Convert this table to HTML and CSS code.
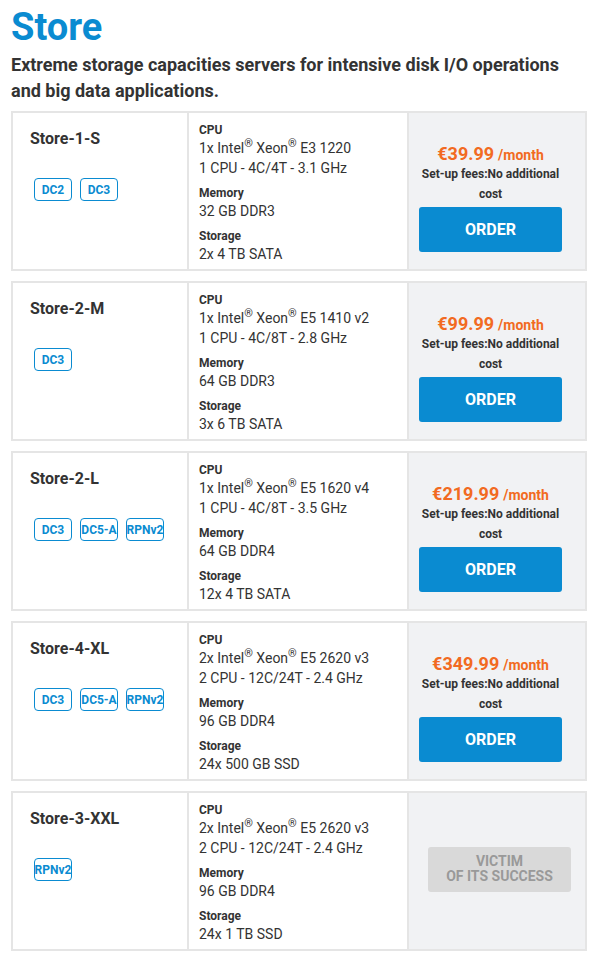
FILE: index.html
```html
<!DOCTYPE html>
<html lang="en">
<head>
<meta charset="utf-8">
<title>Store</title>
<link rel="stylesheet" href="styles.css">
</head>
<body>
<h1 class="page-title">Store</h1>
<p class="page-subtitle">Extreme storage capacities servers for intensive disk I/O operations and big data applications.</p>

<div class="offers">
  <div class="offer">
    <div class="offer-name">
      <div class="name">Store-1-S</div>
      <div class="badges"><span class="badge">DC2</span><span class="badge">DC3</span></div>
    </div>
    <div class="offer-specs">
      <div class="spec-label">CPU</div>
      <div class="spec-value">1x Intel<sup>®</sup> Xeon<sup>®</sup> E3 1220</div>
      <div class="spec-value">1 CPU - 4C/4T - 3.1 GHz</div>
      <div class="spec-label">Memory</div>
      <div class="spec-value">32 GB DDR3</div>
      <div class="spec-label">Storage</div>
      <div class="spec-value">2x 4 TB SATA</div>
    </div>
    <div class="offer-price">
      <div class="price"><span class="amount">€39.99</span> <span class="period">/month</span></div>
      <div class="setup">Set-up fees:No additional cost</div>
      <a class="btn-order" href="#">ORDER</a>
    </div>
  </div>

  <div class="offer">
    <div class="offer-name">
      <div class="name">Store-2-M</div>
      <div class="badges"><span class="badge">DC3</span></div>
    </div>
    <div class="offer-specs">
      <div class="spec-label">CPU</div>
      <div class="spec-value">1x Intel<sup>®</sup> Xeon<sup>®</sup> E5 1410 v2</div>
      <div class="spec-value">1 CPU - 4C/8T - 2.8 GHz</div>
      <div class="spec-label">Memory</div>
      <div class="spec-value">64 GB DDR3</div>
      <div class="spec-label">Storage</div>
      <div class="spec-value">3x 6 TB SATA</div>
    </div>
    <div class="offer-price">
      <div class="price"><span class="amount">€99.99</span> <span class="period">/month</span></div>
      <div class="setup">Set-up fees:No additional cost</div>
      <a class="btn-order" href="#">ORDER</a>
    </div>
  </div>

  <div class="offer">
    <div class="offer-name">
      <div class="name">Store-2-L</div>
      <div class="badges"><span class="badge">DC3</span><span class="badge">DC5-A</span><span class="badge">RPNv2</span></div>
    </div>
    <div class="offer-specs">
      <div class="spec-label">CPU</div>
      <div class="spec-value">1x Intel<sup>®</sup> Xeon<sup>®</sup> E5 1620 v4</div>
      <div class="spec-value">1 CPU - 4C/8T - 3.5 GHz</div>
      <div class="spec-label">Memory</div>
      <div class="spec-value">64 GB DDR4</div>
      <div class="spec-label">Storage</div>
      <div class="spec-value">12x 4 TB SATA</div>
    </div>
    <div class="offer-price">
      <div class="price"><span class="amount">€219.99</span> <span class="period">/month</span></div>
      <div class="setup">Set-up fees:No additional cost</div>
      <a class="btn-order" href="#">ORDER</a>
    </div>
  </div>

  <div class="offer">
    <div class="offer-name">
      <div class="name">Store-4-XL</div>
      <div class="badges"><span class="badge">DC3</span><span class="badge">DC5-A</span><span class="badge">RPNv2</span></div>
    </div>
    <div class="offer-specs">
      <div class="spec-label">CPU</div>
      <div class="spec-value">2x Intel<sup>®</sup> Xeon<sup>®</sup> E5 2620 v3</div>
      <div class="spec-value">2 CPU - 12C/24T - 2.4 GHz</div>
      <div class="spec-label">Memory</div>
      <div class="spec-value">96 GB DDR4</div>
      <div class="spec-label">Storage</div>
      <div class="spec-value">24x 500 GB SSD</div>
    </div>
    <div class="offer-price">
      <div class="price"><span class="amount">€349.99</span> <span class="period">/month</span></div>
      <div class="setup">Set-up fees:No additional cost</div>
      <a class="btn-order" href="#">ORDER</a>
    </div>
  </div>

  <div class="offer">
    <div class="offer-name">
      <div class="name">Store-3-XXL</div>
      <div class="badges"><span class="badge">RPNv2</span></div>
    </div>
    <div class="offer-specs">
      <div class="spec-label">CPU</div>
      <div class="spec-value">2x Intel<sup>®</sup> Xeon<sup>®</sup> E5 2620 v3</div>
      <div class="spec-value">2 CPU - 12C/24T - 2.4 GHz</div>
      <div class="spec-label">Memory</div>
      <div class="spec-value">96 GB DDR4</div>
      <div class="spec-label">Storage</div>
      <div class="spec-value">24x 1 TB SSD</div>
    </div>
    <div class="offer-price offer-price--soldout">
      <span class="btn-soldout">VICTIM<br>OF ITS SUCCESS</span>
    </div>
  </div>
</div>
</body>
</html>
```

FILE: styles.css
```css
* { box-sizing: border-box; }

body {
  margin: 0;
  padding: 5px 13px 0 11px;
  background: #ffffff;
  font-family: Roboto, "Liberation Sans", Arial, sans-serif;
  color: #333333;
}

.page-title {
  margin: 0;
  font-size: 38px;
  line-height: 44px;
  font-weight: 700;
  color: #0a8bd1;
}

.page-subtitle {
  margin: 3px 0 0;
  font-size: 18px;
  line-height: 26px;
  font-weight: 700;
  color: #333333;
}

.offers {
  margin-top: 7px;
  display: flex;
  flex-direction: column;
  gap: 10px;
}

.offer {
  display: grid;
  grid-template-columns: 174px 220px 178px;
  border: 2px solid #e5e5e5;
  width: 576px;
}

.offer-name {
  padding: 16px 10px 0 17px;
}

.name {
  font-size: 16px;
  line-height: 19px;
  font-weight: 700;
  color: #333333;
}

.badges {
  display: flex;
  gap: 8px;
  margin-top: 30px;
  padding-left: 4px;
}

.badge {
  width: 38px;
  height: 23px;
  border: 1px solid #0a8bd1;
  border-radius: 4px;
  display: flex;
  align-items: center;
  justify-content: center;
  font-size: 12px;
  font-weight: 700;
  color: #0a8bd1;
  white-space: nowrap;
}

.offer-specs {
  border-left: 2px solid #e5e5e5;
  padding: 9px 10px 5px 10px;
}

.spec-label {
  font-size: 12px;
  line-height: 16px;
  font-weight: 700;
  color: #333333;
  margin-top: 7px;
}

.spec-label:first-child { margin-top: 0; }

.spec-value {
  font-size: 14px;
  line-height: 20px;
  color: #333333;
}

.spec-value sup {
  font-size: 11px;
  line-height: 0;
}

.offer-price {
  border-left: 2px solid #e5e5e5;
  background: #f1f2f4;
  display: flex;
  flex-direction: column;
  align-items: center;
  justify-content: center;
  padding: 15px 23px 0 10px;
  text-align: center;
}

.price {
  line-height: 18px;
  color: #f26a21;
  font-weight: 700;
  white-space: nowrap;
}

.amount { font-size: 18px; }
.period { font-size: 14px; }

.setup {
  font-size: 12px;
  line-height: 20px;
  font-weight: 700;
  color: #333333;
}

.btn-order {
  margin-top: 3px;
  width: 143px;
  height: 45px;
  background: #0a8bd1;
  border-radius: 3px;
  color: #ffffff;
  font-size: 16px;
  font-weight: 700;
  text-decoration: none;
  display: flex;
  align-items: center;
  justify-content: center;
}

.offer-price--soldout {
  padding: 0 14px 4px 19px;
}

.btn-soldout {
  width: 143px;
  height: 45px;
  background: #d9d9d9;
  border-radius: 3px;
  color: #999999;
  font-size: 14px;
  line-height: 15px;
  font-weight: 700;
  display: flex;
  align-items: center;
  justify-content: center;
  text-align: center;
}
```
